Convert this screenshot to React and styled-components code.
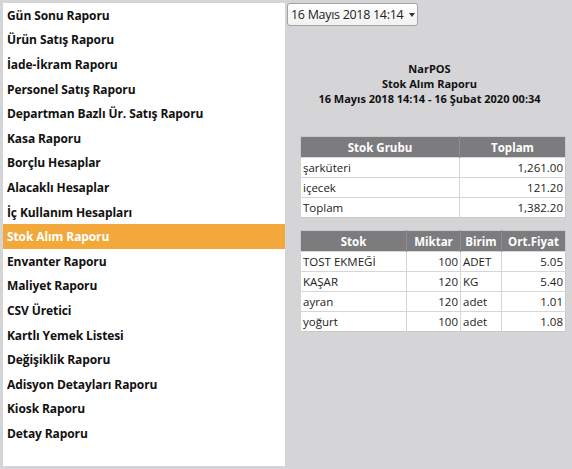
import React from 'react';
import styled, { createGlobalStyle } from 'styled-components';

const GlobalStyle = createGlobalStyle`
  html, body {
    margin: 0;
    padding: 0;
    background: #d5d4d7;
  }
  * {
    box-sizing: border-box;
  }
`;

const Page = styled.div`
  display: flex;
  flex-direction: row;
  height: 469px;
  padding: 3px 0 3px 3px;
  background: #d5d4d7;
  font-family: "Open Sans", "DejaVu Sans", sans-serif;
  color: #111;
`;

const Sidebar = styled.div`
  width: 282px;
  height: 463px;
  background: #ffffff;
  display: flex;
  flex-direction: column;
`;

const MenuItem = styled.div`
  height: 24.6px;
  display: flex;
  align-items: center;
  padding-left: 4px;
  font-size: 12px;
  font-weight: 700;
  letter-spacing: -0.1px;
  color: ${p => (p.$active ? '#ffffff' : '#111111')};
  background: ${p => (p.$active ? '#f2a83a' : 'transparent')};
`;

const Main = styled.div`
  flex: 1;
  display: flex;
  flex-direction: column;
  align-items: flex-start;
  padding-left: 2px;
`;

const Select = styled.div`
  width: 131px;
  height: 23px;
  display: flex;
  align-items: center;
  justify-content: space-between;
  padding: 0 6px 0 3px;
  border: 1px solid #a3a3a3;
  border-radius: 3px;
  background: linear-gradient(#ffffff, #f1f1f1);
  font-size: 12.5px;
  letter-spacing: -0.3px;
  white-space: nowrap;
  color: #222;
`;

const Caret = styled.span`
  width: 0;
  height: 0;
  margin-left: 6px;
  border-left: 3px solid transparent;
  border-right: 3px solid transparent;
  border-top: 4px solid #333;
`;

const Heading = styled.div`
  align-self: stretch;
  margin-top: 35px;
  text-align: center;
  font-size: 11px;
  font-weight: 700;
  line-height: 15px;
  color: #111;
`;

const Table = styled.table`
  margin: ${p => p.$top}px 0 0 13px;
  width: 266px;
  border-collapse: collapse;
  background: #ffffff;
  border: 1px solid #c9c9c9;
  font-size: 11.5px;
`;

const Th = styled.th`
  height: 21px;
  padding: 0 4px;
  background: #7c7b7e;
  color: #ffffff;
  font-weight: 700;
  text-align: center;
  border-left: 1px solid #8e8d90;
  &:first-child {
    border-left: none;
  }
`;

const Td = styled.td`
  height: 20px;
  padding: 0 2px;
  color: #222;
  text-align: ${p => p.$align || 'left'};
  border-top: 1px solid #d6d6d6;
  border-left: 1px solid #d6d6d6;
  white-space: nowrap;
`;

const menu = [
  'Gün Sonu Raporu',
  'Ürün Satış Raporu',
  'İade-İkram Raporu',
  'Personel Satış Raporu',
  'Departman Bazlı Ür. Satış Raporu',
  'Kasa Raporu',
  'Borçlu Hesaplar',
  'Alacaklı Hesaplar',
  'İç Kullanım Hesapları',
  'Stok Alım Raporu',
  'Envanter Raporu',
  'Maliyet Raporu',
  'CSV Üretici',
  'Kartlı Yemek Listesi',
  'Değişiklik Raporu',
  'Adisyon Detayları Raporu',
  'Kiosk Raporu',
  'Detay Raporu',
];

const groups = [
  ['şarküteri', '1,261.00'],
  ['içecek', '121.20'],
  ['Toplam', '1,382.20'],
];

const stocks = [
  ['TOST EKMEĞİ', '100', 'ADET', '5.05'],
  ['KAŞAR', '120', 'KG', '5.40'],
  ['ayran', '120', 'adet', '1.01'],
  ['yoğurt', '100', 'adet', '1.08'],
];

export default function App() {
  return (
    <>
      <GlobalStyle />
      <Page>
        <Sidebar>
          {menu.map(m => (
            <MenuItem key={m} $active={m === 'Stok Alım Raporu'}>{m}</MenuItem>
          ))}
        </Sidebar>
        <Main>
          <Select>
            <span>16 Mayıs 2018 14:14</span>
            <Caret />
          </Select>
          <Heading>
            <div>NarPOS</div>
            <div>Stok Alım Raporu</div>
            <div>16 Mayıs 2018 14:14 - 16 Şubat 2020 00:34</div>
          </Heading>
          <Table $top={30}>
            <thead>
              <tr>
                <Th style={{ width: 159 }}>Stok Grubu</Th>
                <Th>Toplam</Th>
              </tr>
            </thead>
            <tbody>
              {groups.map(g => (
                <tr key={g[0]}>
                  <Td>{g[0]}</Td>
                  <Td $align="right">{g[1]}</Td>
                </tr>
              ))}
            </tbody>
          </Table>
          <Table $top={12}>
            <thead>
              <tr>
                <Th style={{ width: 106 }}>Stok</Th>
                <Th style={{ width: 54 }}>Miktar</Th>
                <Th style={{ width: 41 }}>Birim</Th>
                <Th>Ort.Fiyat</Th>
              </tr>
            </thead>
            <tbody>
              {stocks.map(s => (
                <tr key={s[0]}>
                  <Td>{s[0]}</Td>
                  <Td $align="right">{s[1]}</Td>
                  <Td>{s[2]}</Td>
                  <Td $align="right">{s[3]}</Td>
                </tr>
              ))}
            </tbody>
          </Table>
        </Main>
      </Page>
    </>
  );
}
